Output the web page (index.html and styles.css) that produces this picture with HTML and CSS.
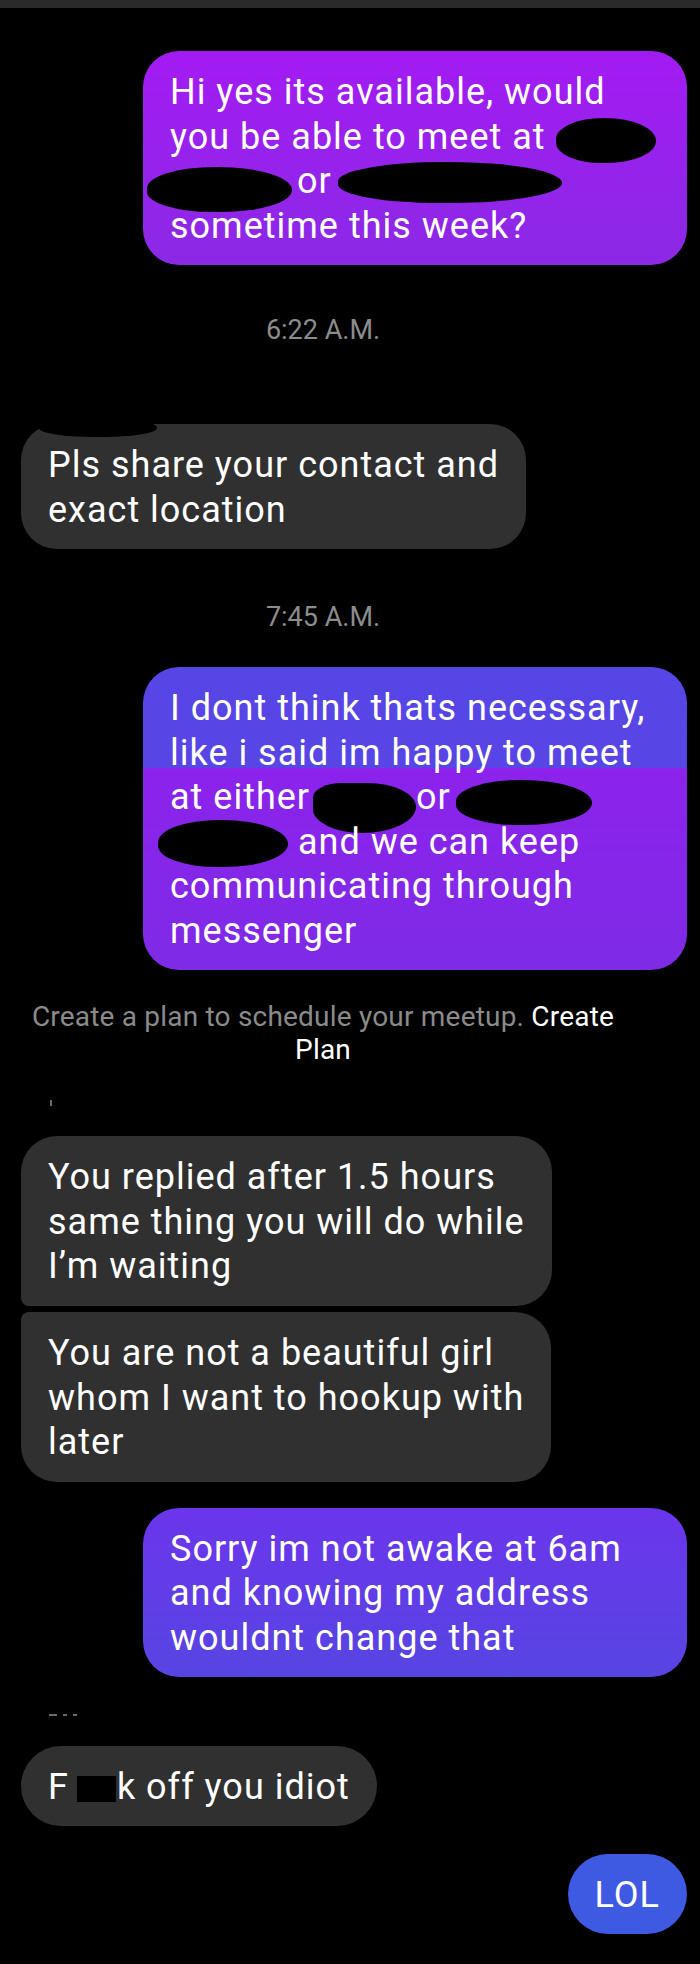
FILE: index.html
```html
<!DOCTYPE html>
<html lang="en">

<head>
    <meta charset="UTF-8">
    <meta name="viewport" content="width=device-width, initial-scale=1.0">
    <title>Messenger</title>
    <link rel="stylesheet" href="styles.css">
</head>

<body>

    <div class="topbar"></div>

    <div class="chat">
        <div class="bubble out out-first">Hi yes its available, would<br>you be able to meet at <span class="blot blot-a"></span><br><span class="blot blot-b"></span>or<span class="blot blot-c"></span><br>sometime this week?</div>

        <div class="stamp stamp-first">6:22 A.M.</div>

        <div class="bubble in named">Pls share your contact and<br>exact location</div>

        <div class="stamp stamp-second">7:45 A.M.</div>

        <div class="bubble out out-mixed">I dont think thats necessary,<br>like i said im happy to meet<br>at either<span class="blot blot-d"></span>or<span class="blot blot-e"></span><br><span class="blot blot-f"></span> and we can keep<br>communicating through<br>messenger</div>

        <div class="plan">Create a plan to schedule your meetup. <span class="plan-link">Create<br>Plan</span></div>

        <div class="sender sender-first"><span class="speck"></span></div>

        <div class="bubble in group-top">You replied after 1.5 hours<br>same thing you will do while<br>I’m waiting</div>
        <div class="bubble in group-bottom">You are not a beautiful girl<br>whom I want to hookup with<br>later</div>

        <div class="bubble out out-blue">Sorry im not awake at 6am<br>and knowing my address<br>wouldnt change that</div>

        <div class="sender sender-second"><span class="dash"></span><span class="dot"></span><span class="dot"></span></div>

        <div class="bubble in pill">F<span class="censor"></span>k off you idiot</div>

        <div class="bubble out pill lol">LOL</div>
    </div>

</body>

</html>
```

FILE: styles.css
```css
* {
    margin: 0;
    padding: 0;
    box-sizing: border-box;
}

body {
    background-color: #000;
    font-family: Roboto, "Liberation Sans", sans-serif;
    color: #fff;
    width: 700px;
    height: 1964px;
    overflow: hidden;
}

.topbar {
    height: 8px;
    background-color: #2a2a2a;
}

.chat {
    display: flex;
    flex-direction: column;
    padding: 0 13px 0 21px;
}

/* message bubbles */
.bubble {
    position: relative;
    font-size: 36px;
    letter-spacing: 1px;
    line-height: 44.5px;
    padding: 19px 27px 17px;
    border-radius: 36px;
    white-space: nowrap;
}

.bubble.in {
    align-self: flex-start;
    background-color: #303030;
}

.bubble.out {
    align-self: flex-end;
    width: 544px;
}

.out-first {
    margin-top: 43px;
    background: linear-gradient(#a31bf3, #8b29e5);
}

.out-mixed {
    margin-top: 34px;
    background: linear-gradient(#5646e5 0, #5845e6 101px, #8c22ec 101px, #7e2be6 100%);
}

.out-blue {
    margin-top: 26px;
    background: linear-gradient(#6b35ec, #5745e2);
}

.named {
    margin-top: 78px;
}

/* redacted sender name cuts into the bubble */
.named::before {
    content: "";
    position: absolute;
    left: 18px;
    top: -7px;
    width: 118px;
    height: 20px;
    background-color: #000;
    border-radius: 40% 60% 50% 50%;
}

.group-top {
    margin-top: 30px;
    border-radius: 36px 36px 36px 8px;
}

.group-bottom {
    margin-top: 6.5px;
    border-radius: 8px 36px 36px 36px;
}

.pill {
    border-radius: 40px;
    margin-top: 30px;
}

.lol {
    width: auto !important;
    margin-top: 27.5px;
    padding: 19px 27px 17px;
    background-color: #3e5ae3;
}

/* scribbled out words */
.blot {
    display: inline-block;
    background-color: #000;
    border-radius: 48% 52% 50% 46%;
    margin-top: -20px;
    margin-bottom: -20px;
}

.blot-a {
    width: 100px;
    height: 45px;
    vertical-align: 6px;
}

.blot-b {
    width: 145px;
    height: 45px;
    margin-left: -23px;
    margin-right: 5px;
    vertical-align: 1px;
}

.blot-c {
    width: 224px;
    height: 41px;
    margin-left: 6px;
    vertical-align: 10px;
}

.blot-d {
    width: 103px;
    height: 50px;
    margin-left: 3px;
    vertical-align: -4px;
    border-radius: 30% 50% 55% 50%;
}

.blot-e {
    width: 136px;
    height: 45px;
    margin-left: 5px;
    vertical-align: 4px;
}

.blot-f {
    width: 130px;
    height: 47px;
    margin-left: -12px;
    vertical-align: 7px;
}

.censor {
    display: inline-block;
    width: 39px;
    height: 26px;
    margin: 0 1px 0 8px;
    background-color: #000;
    vertical-align: -3px;
}

/* timestamps and notices */
.stamp {
    padding-right: 62px;
    text-align: center;
    font-size: 27px;
    line-height: 32px;
    color: #8c8c8c;
}

.stamp-first {
    margin-top: 49px;
}

.stamp-second {
    margin-top: 52px;
}

.plan {
    margin-top: 30px;
    padding-right: 62px;
    text-align: center;
    font-size: 28px;
    letter-spacing: 0.2px;
    line-height: 33px;
    color: #8a8a8a;
}

.plan-link {
    color: #fff;
}

.sender {
    display: flex;
    align-items: flex-end;
    gap: 6px;
    padding-left: 29px;
}

.sender-first {
    margin-top: 34px;
    height: 6px;
}

.sender-second {
    margin-top: 34.5px;
    height: 4px;
    padding-left: 28px;
}

.speck {
    width: 2px;
    height: 6px;
    background-color: #6a6a6a;
}

.dash {
    width: 8px;
    height: 2px;
    background-color: #6a6a6a;
}

.dot {
    width: 4px;
    height: 2px;
    background-color: #6a6a6a;
}
```
